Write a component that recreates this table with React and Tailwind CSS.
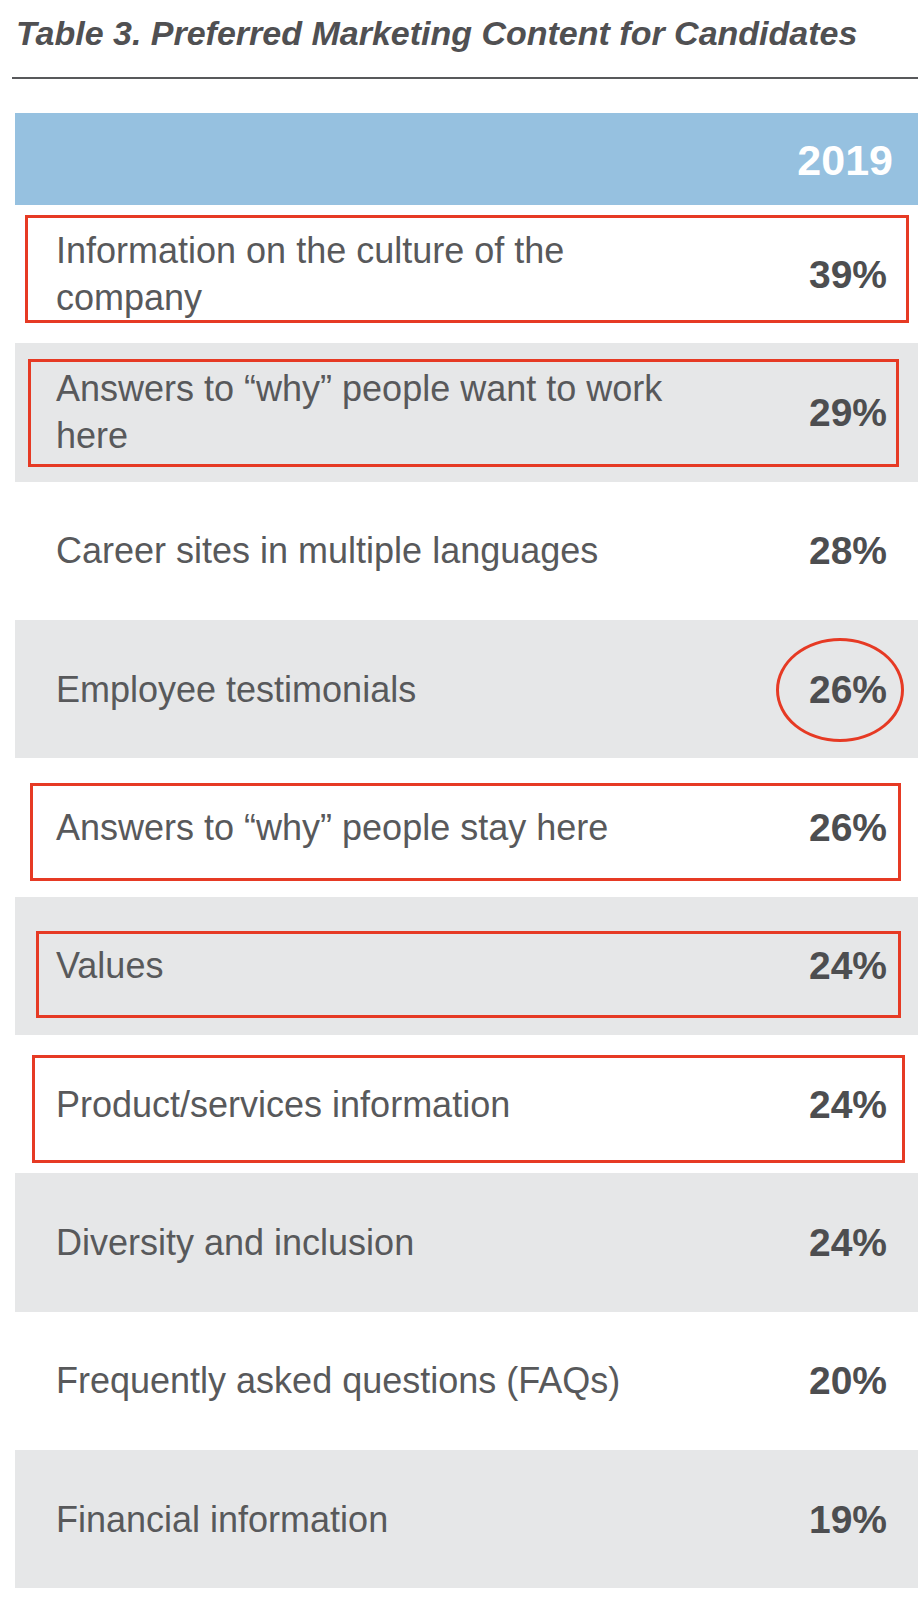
const rows = [
  {
    lines: ["Information on the culture of the", "company"],
    pct: "39%",
    mark: "left-[9.6px] top-[10px] w-[884px] h-[108px] border-[3px] border-[#e63a24]",
  },
  {
    lines: ["Answers to \u201cwhy\u201d people want to work", "here"],
    pct: "29%",
    mark: "left-[13px] top-[16px] w-[871px] h-[108px] border-[3px] border-[#e63a24]",
  },
  { lines: ["Career sites in multiple languages"], pct: "28%" },
  {
    lines: ["Employee testimonials"],
    pct: "26%",
    mark: "left-[761px] top-[18px] w-[128px] h-[104px] rounded-[50%] border-[3px] border-[#e63a24]",
  },
  {
    lines: ["Answers to \u201cwhy\u201d people stay here"],
    pct: "26%",
    mark: "left-[15.4px] top-[24.4px] w-[871px] h-[98.3px] border-[3px] border-[#e63a24]",
  },
  {
    lines: ["Values"],
    pct: "24%",
    mark: "left-[21.3px] top-[34.3px] w-[865px] h-[87.3px] border-[3px] border-[#e63a24]",
  },
  {
    lines: ["Product/services information"],
    pct: "24%",
    mark: "left-[17.2px] top-[20px] w-[873px] h-[108.3px] border-[3px] border-[#e63a24]",
  },
  { lines: ["Diversity and inclusion"], pct: "24%" },
  { lines: ["Frequently asked questions (FAQs)"], pct: "20%" },
  { lines: ["Financial information"], pct: "19%" },
];

export default function App() {
  return (
    <div className="w-[918px] min-h-[1600px] bg-white font-['Liberation_Sans',Arial,sans-serif]">
      {/* title */}
      <h1 className="pl-[16px] pt-[13px] text-[34px] leading-[40px] font-bold italic text-[#505052]">
        Table 3. Preferred Marketing Content for Candidates
      </h1>
      <div className="ml-[12px] mt-[24px] h-[2px] bg-[#58595b]" />

      {/* table */}
      <div className="ml-[15px] mt-[34px]">
        <div className="flex h-[92px] items-start justify-end bg-[#96c1e0] pr-[25px] pt-[25px]">
          <span className="text-[43px] font-bold leading-[44px] text-white">2019</span>
        </div>

        {rows.map((row, i) => (
          <div
            key={i}
            className={`relative flex h-[138.33px] items-center justify-between pl-[41px] pr-[31px] ${
              i % 2 ? "bg-[#e6e7e8]" : "bg-white"
            }`}
          >
            <div className="text-[36px] leading-[47px] text-[#58595b]">
              {row.lines.map((line, j) => (
                <div key={j}>{line}</div>
              ))}
            </div>
            <span className="text-[39px] font-bold leading-none text-[#4d4e50]">{row.pct}</span>
            {row.mark && <div className={`pointer-events-none absolute ${row.mark}`} />}
          </div>
        ))}
      </div>
    </div>
  );
}
